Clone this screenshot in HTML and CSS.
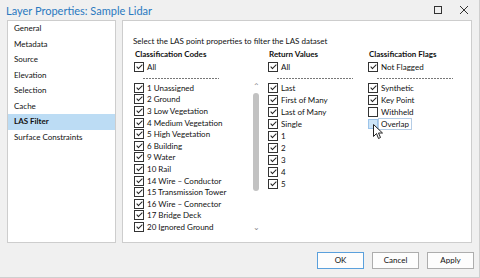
FILE: index.html
```html
<!doctype html>
<html lang="en">
  <head>
    <meta charset="UTF-8" />
    <title>Layer Properties: Sample Lidar</title>
    <link rel="stylesheet" href="styles.css">
  </head>
  <body>
    <div class="window">
      <div class="titlebar">
        <span class="title">Layer Properties: Sample Lidar</span>
        <div class="controls">
          <svg width="10" height="10" viewBox="0 0 10 10"><rect x="1.5" y="1.5" width="7" height="7" fill="none" stroke="#333" stroke-width="1"/></svg>
          <svg width="10" height="10" viewBox="0 0 10 10"><path d="M1 1 L9 9 M9 1 L1 9" stroke="#333" stroke-width="1" fill="none"/></svg>
        </div>
      </div>

      <div class="main">
        <ul class="nav">
          <li>General</li>
          <li>Metadata</li>
          <li>Source</li>
          <li>Elevation</li>
          <li>Selection</li>
          <li>Cache</li>
          <li class="active">LAS Filter</li>
          <li>Surface Constraints</li>
        </ul>

        <div class="panel">
          <p class="intro">Select the LAS point properties to filter the LAS dataset</p>
          <div class="columns">
            <!-- classification codes -->
            <div class="col col-codes">
              <div class="col-head">Classification Codes</div>
              <div class="check"><span class="box on"></span>All</div>
              <div class="rule"></div>
              <div class="scroll-list">
                <div class="items">
                  <div class="check"><span class="box on"></span>1 Unassigned</div>
                  <div class="check"><span class="box on"></span>2 Ground</div>
                  <div class="check"><span class="box on"></span>3 Low Vegetation</div>
                  <div class="check"><span class="box on"></span>4 Medium Vegetation</div>
                  <div class="check"><span class="box on"></span>5 High Vegetation</div>
                  <div class="check"><span class="box on"></span>6 Building</div>
                  <div class="check"><span class="box on"></span>9 Water</div>
                  <div class="check"><span class="box on"></span>10 Rail</div>
                  <div class="check"><span class="box on"></span>14 Wire – Conductor</div>
                  <div class="check"><span class="box on"></span>15 Transmission Tower</div>
                  <div class="check"><span class="box on"></span>16 Wire – Connector</div>
                  <div class="check"><span class="box on"></span>17 Bridge Deck</div>
                  <div class="check"><span class="box on"></span>20 Ignored Ground</div>
                </div>
                <div class="scrollbar">
                  <span class="arrow">&#8963;</span>
                  <span class="track"><span class="thumb"></span></span>
                  <span class="arrow">&#8964;</span>
                </div>
              </div>
            </div>

            <!-- return values -->
            <div class="col col-returns">
              <div class="col-head">Return Values</div>
              <div class="check"><span class="box on"></span>All</div>
              <div class="rule"></div>
              <div class="items">
                <div class="check"><span class="box on"></span>Last</div>
                <div class="check"><span class="box on"></span>First of Many</div>
                <div class="check"><span class="box on"></span>Last of Many</div>
                <div class="check"><span class="box on"></span>Single</div>
                <div class="check"><span class="box on"></span>1</div>
                <div class="check"><span class="box on"></span>2</div>
                <div class="check"><span class="box on"></span>3</div>
                <div class="check"><span class="box on"></span>4</div>
                <div class="check"><span class="box on"></span>5</div>
              </div>
            </div>

            <!-- classification flags -->
            <div class="col col-flags">
              <div class="col-head">Classification Flags</div>
              <div class="check"><span class="box on"></span>Not Flagged</div>
              <div class="rule"></div>
              <div class="items">
                <div class="check"><span class="box on"></span>Synthetic</div>
                <div class="check"><span class="box on"></span>Key Point</div>
                <div class="check"><span class="box"></span>Withheld</div>
                <div class="check hover"><span class="box"></span><span class="focus">Overlap</span>
                  <svg class="cursor" width="10" height="16" viewBox="0 0 10 16"><path d="M0.5 0.5 L0.5 12.5 L3.5 9.5 L5.5 14.5 L7.5 13.5 L5.5 9 L9.5 9 Z" fill="#fff" stroke="#222" stroke-width="1" stroke-linejoin="round"/></svg>
                </div>
              </div>
            </div>
          </div>
        </div>
      </div>

      <div class="footer">
        <button class="btn default">OK</button>
        <button class="btn">Cancel</button>
        <button class="btn">Apply</button>
      </div>
    </div>
  </body>
</html>
```

FILE: styles.css
```css
body {
  margin: 0;
  font-family: Lato, 'Noto Sans', sans-serif;
  font-size: 8px;
  color: #111;
}
.window {
  width: 480px;
  height: 278px;
  box-sizing: border-box;
  background: #f0f0f0;
  border-right: 1px solid #cfcfcf;
  border-bottom: 1px solid #cfcfcf;
  display: flex;
  flex-direction: column;
}
.titlebar {
  height: 20px;
  display: flex;
  align-items: center;
  justify-content: space-between;
  padding: 0 10px 0 6px;
}
.title {
  font-size: 11px;
  color: #2a79c0;
}
.controls {
  display: flex;
  gap: 16px;
}
.main {
  display: flex;
  gap: 6px;
  padding: 0 7px;
  height: 223px;
}
.nav {
  list-style: none;
  margin: 0;
  padding: 0;
  width: 107px;
  background: #fff;
  border: 1px solid #cdcdcd;
}
.nav li {
  height: 15.5px;
  line-height: 15.5px;
  padding-left: 6px;
}
.nav li.active {
  background: #bcdcf4;
  font-weight: bold;
}
.panel {
  flex: 1;
  background: #fff;
  border: 1px solid #cdcdcd;
  padding: 14px 0 0 10px;
}
.intro {
  margin: 0;
  line-height: 13px;
}
.columns {
  display: flex;
  padding-left: 1px;
}
.col-codes {
  width: 134px;
}
.col-returns {
  width: 100px;
}
.col-flags {
  flex: 1;
}
.col-head {
  font-weight: bold;
  line-height: 13px;
  padding-left: 1px;
}
.check {
  height: 12px;
  display: flex;
  align-items: center;
  white-space: nowrap;
}
.scroll-list .check {
  height: 11.6px;
}
.box {
  position: relative;
  width: 8px;
  height: 8px;
  border: 1px solid #333;
  margin-right: 3px;
  flex: none;
}
.box.on::after {
  content: '';
  position: absolute;
  left: 2.5px;
  top: 0;
  width: 2px;
  height: 5px;
  border: solid #222;
  border-width: 0 1.3px 1.3px 0;
  transform: rotate(45deg);
}
.rule {
  height: 1px;
  width: 76px;
  margin: 5px 0 3px 9px;
  background: repeating-linear-gradient(90deg, #777 0 2px, transparent 2px 3px);
}
.scroll-list {
  display: flex;
  height: 150px;
  overflow: hidden;
}
.scroll-list .items {
  flex: 1;
}
.scrollbar {
  width: 10px;
  margin-right: 7px;
  display: flex;
  flex-direction: column;
  align-items: center;
  color: #888;
  font-size: 8px;
}
.arrow {
  height: 9px;
  line-height: 9px;
}
.track {
  flex: 1;
  padding-top: 2px;
}
.thumb {
  display: block;
  width: 6px;
  height: 98px;
  border-radius: 3px;
  background: #c2c2c2;
}
.hover .box {
  background: #cce4f7;
  border-color: #9cc4ea;
}
.hover {
  position: relative;
}
.focus {
  border: 1px solid #b5cde6;
  padding: 0 2px;
  margin-left: -3px;
  line-height: 10px;
}
.cursor {
  position: absolute;
  left: 5px;
  top: 6px;
}
.footer {
  flex: 1;
  display: flex;
  justify-content: flex-end;
  align-items: center;
  gap: 8px;
  padding: 0 5px 0 0;
}
.btn {
  width: 47px;
  height: 17px;
  padding: 0;
  font: inherit;
  color: #111;
  background: #fdfdfd;
  border: 1px solid #adadad;
}
.btn.default {
  border-color: #5aa0dc;
}
```
